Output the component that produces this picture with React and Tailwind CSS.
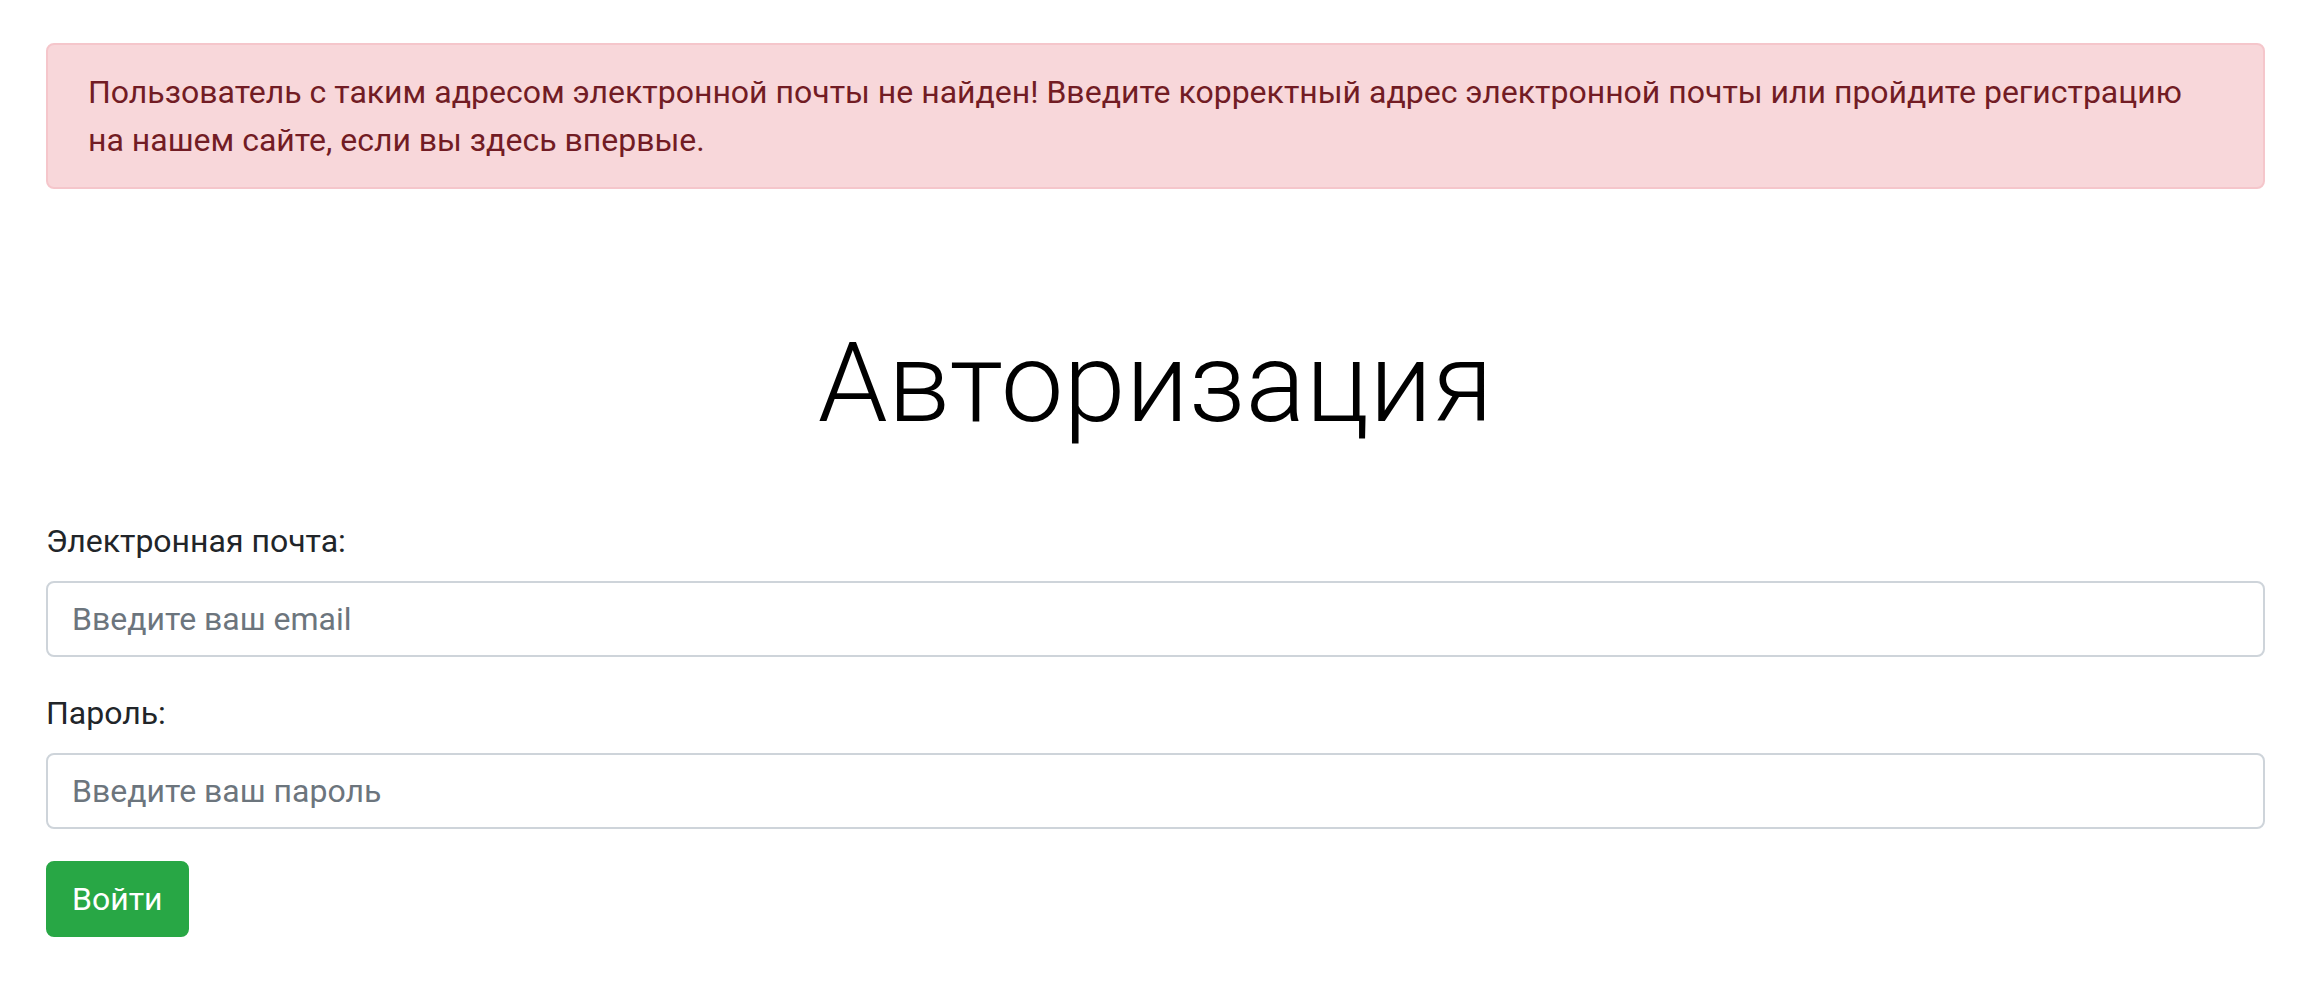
import React from 'react';

const App = () => {
  return (
    <div className="min-h-screen bg-white pl-[46px] pr-[51px] pt-[43px] text-[32px] leading-[48px] text-[#212529] font-['Roboto',sans-serif]">
      <div className="rounded-[8px] border-2 border-[#f5c6cb] bg-[#f8d7da] pl-[40px] pr-[44px] py-[23px] text-[#721c24]">
        Пользователь с таким адресом электронной почты не найден! Введите корректный адрес электронной почты или пройдите регистрацию на нашем сайте, если вы здесь впервые.
      </div>

      <h1 className="mt-[127px] mb-[67px] text-center text-[112px] leading-[134px] font-light text-black">
        Авторизация
      </h1>

      <form onSubmit={(e) => e.preventDefault()}>
        <div className="mb-[32px]">
          <label className="mb-[16px] block">Электронная почта:</label>
          <input
            type="email"
            placeholder="Введите ваш email"
            className="block h-[76px] w-full rounded-[8px] border-2 border-[#ced4da] px-[24px] text-[32px] text-[#495057] placeholder:text-[#6c757d] outline-none"
          />
        </div>
        <div className="mb-[32px]">
          <label className="mb-[16px] block">Пароль:</label>
          <input
            type="password"
            placeholder="Введите ваш пароль"
            className="block h-[76px] w-full rounded-[8px] border-2 border-[#ced4da] px-[24px] text-[32px] text-[#495057] placeholder:text-[#6c757d] outline-none"
          />
        </div>
        <button
          type="submit"
          className="h-[76px] rounded-[8px] border-2 border-[#28a745] bg-[#28a745] px-[24px] text-[32px] text-white"
        >
          Войти
        </button>
      </form>
    </div>
  );
};

export default App;
